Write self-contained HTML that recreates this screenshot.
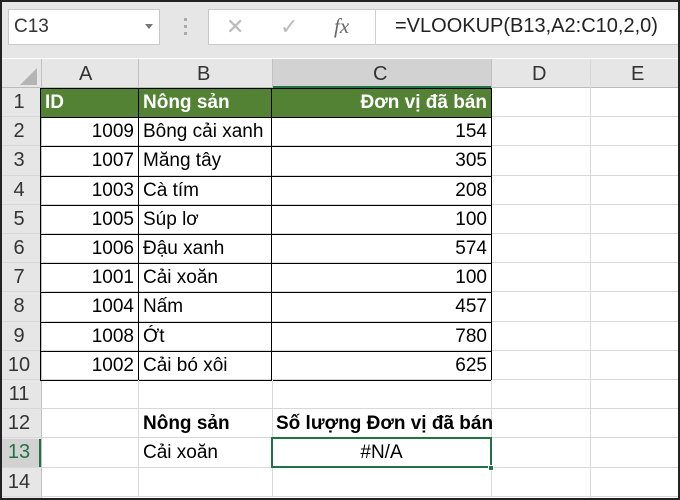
<!DOCTYPE html><html><head><style>
*{margin:0;padding:0;box-sizing:border-box}
body{width:680px;height:500px;background:#fff;font-family:"Liberation Sans",sans-serif;position:relative;overflow:hidden}
.a{position:absolute}
.t{position:absolute;font-size:19px;line-height:29px;white-space:nowrap;color:#000}
</style></head><body>
<div class="a" style="left:0;top:0;width:680px;height:500px;border:2px solid #222;background:#fff"></div>
<div class="a" style="left:2px;top:2px;width:676px;height:56px;background:#e6e6e6"></div>
<div class="a" style="left:8px;top:9px;width:152px;height:36px;background:#fff;border:1px solid #c8c8c8"></div>
<div class="t" style="left:14px;top:12px;font-size:19px;color:#333">C13</div>
<div class="a" style="left:145px;top:24px;width:0;height:0;border-left:4px solid transparent;border-right:4px solid transparent;border-top:5px solid #777"></div>
<div class="a" style="left:184px;top:18px;width:3px;height:17px;border-left:3px dotted #aaa"></div>
<div class="a" style="left:208px;top:9px;width:472px;height:36px;background:#fff;border:1px solid #c8c8c8"></div>
<div class="t" style="left:226px;top:12px;font-size:22px;color:#bbb">✕</div>
<div class="t" style="left:280px;top:12px;font-size:22px;color:#bbb">✓</div>
<div class="t" style="left:334px;top:12px;font-size:21px;color:#666;font-family:'Liberation Serif',serif;font-style:italic">fx</div>
<div class="a" style="left:375px;top:9px;width:1px;height:36px;background:#d0d0d0"></div>
<div class="t" style="left:395px;top:12px;font-size:20px;color:#222">=VLOOKUP(B13,A2:C10,2,0)</div>
<div class="a" style="left:2px;top:59px;width:676px;height:29px;background:#e6e6e6;border-bottom:1px solid #bbb"></div>
<div class="a" style="left:272px;top:59px;width:219px;height:29px;background:#d2d2d2;border-bottom:2px solid #217346"></div>
<div class="a" style="left:20px;top:68px;width:0;height:0;border-left:17px solid transparent;border-bottom:17px solid #b4b4b4"></div>
<div class="a" style="left:41px;top:59px;width:1px;height:441px;background:#c0c0c0"></div>
<div class="a" style="left:138px;top:59px;width:1px;height:29px;background:#c0c0c0"></div>
<div class="a" style="left:272px;top:59px;width:1px;height:29px;background:#c0c0c0"></div>
<div class="a" style="left:491px;top:59px;width:1px;height:29px;background:#c0c0c0"></div>
<div class="a" style="left:590px;top:59px;width:1px;height:441px;background:#d8d8d8"></div>
<div class="t" style="left:79px;top:60px;font-size:20px;color:#333">A</div>
<div class="t" style="left:197px;top:60px;font-size:20px;color:#333">B</div>
<div class="t" style="left:373px;top:60px;font-size:20px;color:#333">C</div>
<div class="t" style="left:532px;top:60px;font-size:20px;color:#333">D</div>
<div class="t" style="left:631px;top:60px;font-size:20px;color:#333">E</div>
<div class="a" style="left:2px;top:88px;width:39px;height:410px;background:#e6e6e6"></div>
<div class="a" style="left:2px;top:439px;width:39px;height:29px;background:#d2d2d2;border-right:2px solid #217346"></div>
<div id="g"></div>
<script>
var h=29.2,top0=88,s='';
for(var i=0;i<14;i++){var y=top0+i*h;
s+='<div class="a" style="left:2px;top:'+(y+h-1)+'px;width:676px;height:1px;background:#d8d8d8"></div>';
s+='<div class="t" style="left:0;width:38px;text-align:center;top:'+y+'px;font-size:20px;color:'+(i==12?'#217346':'#333')+'">'+(i+1)+'</div>';}
s+='<div class="a" style="left:41px;top:88px;width:450px;height:29px;background:#548235"></div>';
var d=[[1009,'Bông cải xanh',154],[1007,'Măng tây',305],[1003,'Cà tím',208],[1005,'Súp lơ',100],[1006,'Đậu xanh',574],[1001,'Cải xoăn',100],[1004,'Nấm',457],[1008,'Ớt',780],[1002,'Cải bó xôi',625]];
s+='<div class="t" style="left:45px;top:88px;color:#fff;font-weight:bold">ID</div><div class="t" style="left:143px;top:88px;color:#fff;font-weight:bold">Nông sản</div><div class="t" style="left:272px;width:215px;text-align:right;top:88px;color:#fff;font-weight:bold">Đơn vị đã bán</div>';
for(var i=0;i<9;i++){var y=top0+(i+1)*h;
s+='<div class="t" style="left:41px;width:93px;text-align:right;top:'+y+'px">'+d[i][0]+'</div><div class="t" style="left:143px;top:'+y+'px">'+d[i][1]+'</div><div class="t" style="left:272px;width:215px;text-align:right;top:'+y+'px">'+d[i][2]+'</div>';}
s+='<div class="a" style="left:40px;top:88px;width:452px;height:'+(10*h+1)+'px;border:1px solid #000"></div>';
s+='<div class="a" style="left:138px;top:88px;width:1px;height:'+(10*h)+'px;background:#000"></div><div class="a" style="left:271px;top:88px;width:1px;height:'+(10*h)+'px;background:#000"></div>';
for(var i=1;i<10;i++)s+='<div class="a" style="left:40px;top:'+(top0+i*h)+'px;width:452px;height:1px;background:#000"></div>';
var y12=top0+11*h,y13=top0+12*h;
s+='<div class="a" style="left:138px;top:'+(top0+10*h)+'px;width:1px;height:'+(4*h)+'px;background:#d8d8d8"></div><div class="a" style="left:272px;top:'+(top0+10*h)+'px;width:1px;height:'+(4*h)+'px;background:#d8d8d8"></div><div class="a" style="left:491px;top:'+(top0+10*h)+'px;width:1px;height:'+(4*h)+'px;background:#d8d8d8"></div>';
s+='<div class="t" style="left:143px;top:'+y12+'px;font-weight:bold">Nông sản</div><div class="t" style="left:276px;top:'+y12+'px;font-weight:bold">Số lượng Đơn vị đã bán</div>';
s+='<div class="t" style="left:143px;top:'+y13+'px">Cải xoăn</div>';
s+='<div class="a" style="left:271px;top:'+(y13-1)+'px;width:221px;height:'+(h+1)+'px;border:2px solid #217346"></div><div class="a" style="left:488px;top:'+(y13+h-3)+'px;width:6px;height:6px;background:#217346;border:1px solid #fff"></div>';
s+='<div class="t" style="left:272px;width:219px;text-align:center;top:'+y13+'px">#N/A</div>';
document.getElementById('g').innerHTML=s;
</script>
<div class="a" style="left:0;top:0;width:680px;height:500px;border:2px solid #222"></div>
</body></html>
